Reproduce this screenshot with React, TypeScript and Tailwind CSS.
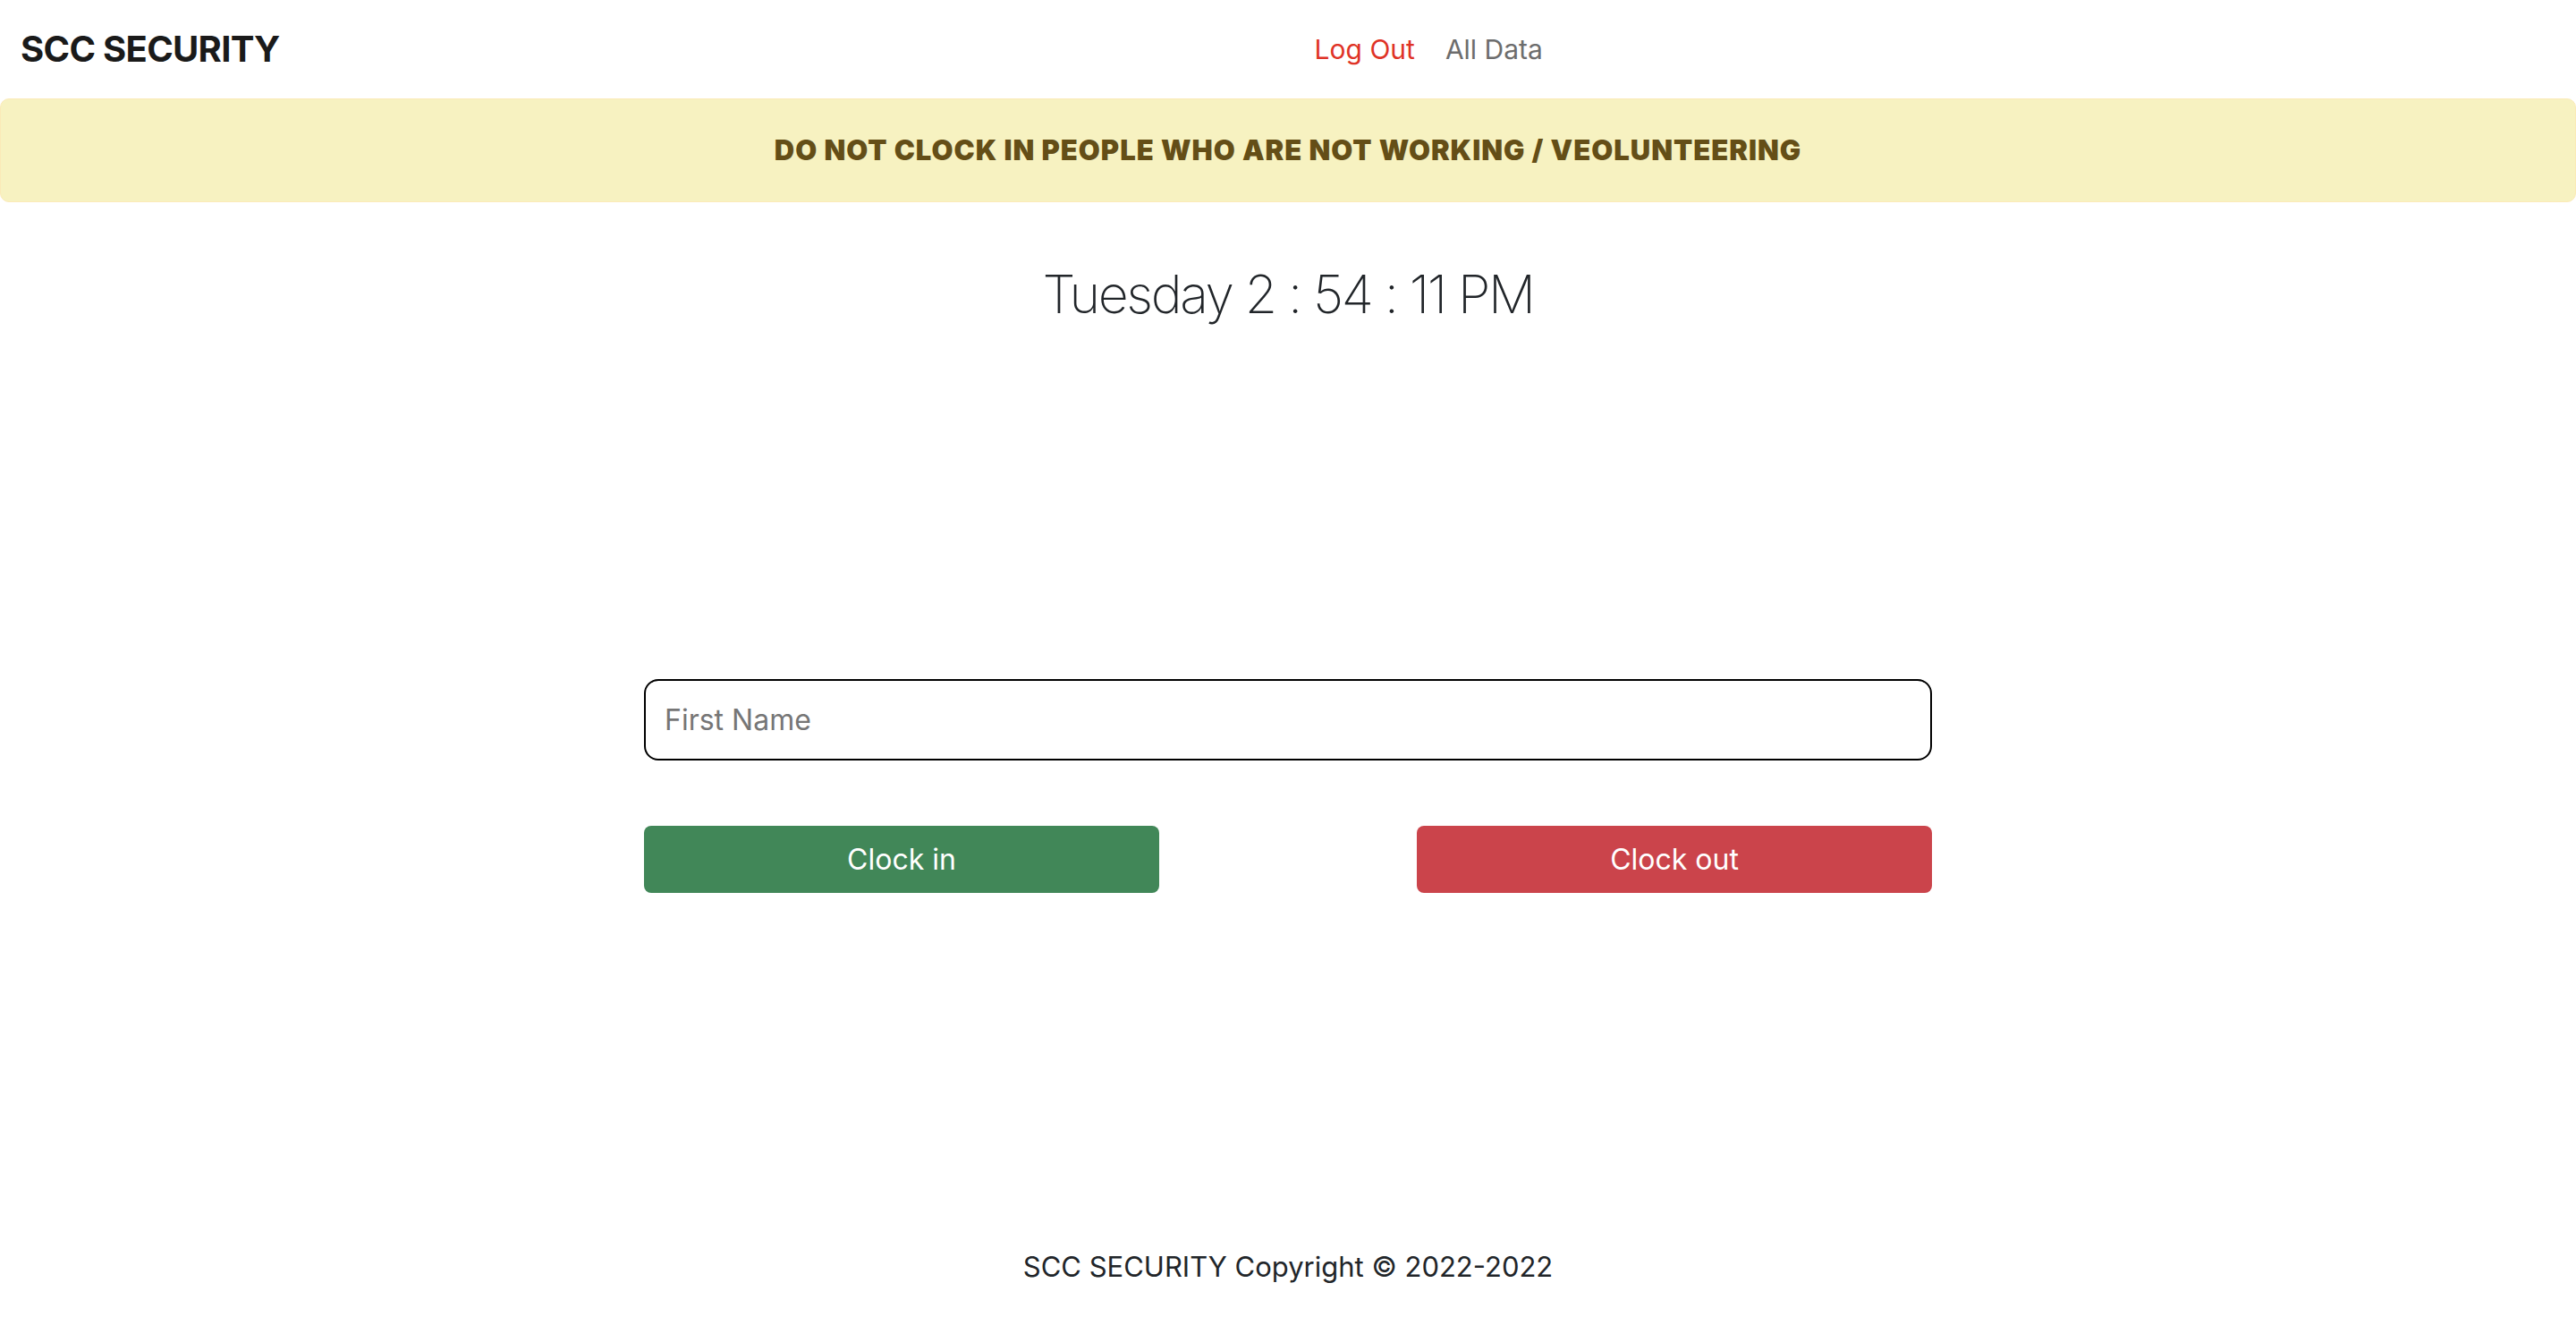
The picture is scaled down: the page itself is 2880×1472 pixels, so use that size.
import { useState } from 'react'

export default function App() {
  const [firstName, setFirstName] = useState('')

  return (
    <div className="min-h-screen bg-white text-[#212529] font-['Inter','Liberation_Sans',sans-serif]">
      {/* top navbar */}
      <nav className="flex h-[110px] items-center px-[23px]">
        <span className="text-[40px] font-bold leading-[1.2] text-[#1a1a1a] tracking-[-0.7px]">SCC SECURITY</span>
        <div className="ml-[1157px] flex gap-[34px] text-[30px] leading-[1.2]">
          <a href="#" className="text-[#df3326]">Log Out</a>
          <a href="#" className="text-[#6d6d6d]">All Data</a>
        </div>
      </nav>

      {/* warning banner */}
      <div className="flex h-[116px] items-center justify-center rounded-[10px] border border-[#fbeab8] bg-[#f7f2c1]">
        <p className="text-[31px] font-black leading-[1.2] tracking-[1px] text-[#644e17]">
          DO NOT CLOCK IN PEOPLE WHO ARE NOT WORKING / VEOLUNTEERING
        </p>
      </div>

      {/* live clock */}
      <div className="mt-[67px] text-center text-[59px] font-extralight leading-[72px] tracking-[-2.4px]">
        Tuesday 2 : 54 : 11 PM
      </div>

      <div className="mx-auto mt-[394px] w-[1440px]">
        <input
          type="text"
          value={firstName}
          onChange={(e) => setFirstName(e.target.value)}
          placeholder="First Name"
          className="block h-[91px] w-full rounded-[16px] border-2 border-black px-[21px] text-[32px] outline-none placeholder:text-[#767676]"
        />

        <div className="mt-[73px] flex justify-between">
          <button className="h-[75px] w-[576px] rounded-[8px] bg-[#418758] text-[32px] text-white">
            Clock in
          </button>
          <button className="h-[75px] w-[576px] rounded-[8px] bg-[#cb444b] text-[32px] text-white">
            Clock out
          </button>
        </div>
      </div>

      <footer className="mt-[394px] text-center text-[31px] leading-[48px]">
        SCC SECURITY Copyright © 2022-2022
      </footer>
    </div>
  )
}
